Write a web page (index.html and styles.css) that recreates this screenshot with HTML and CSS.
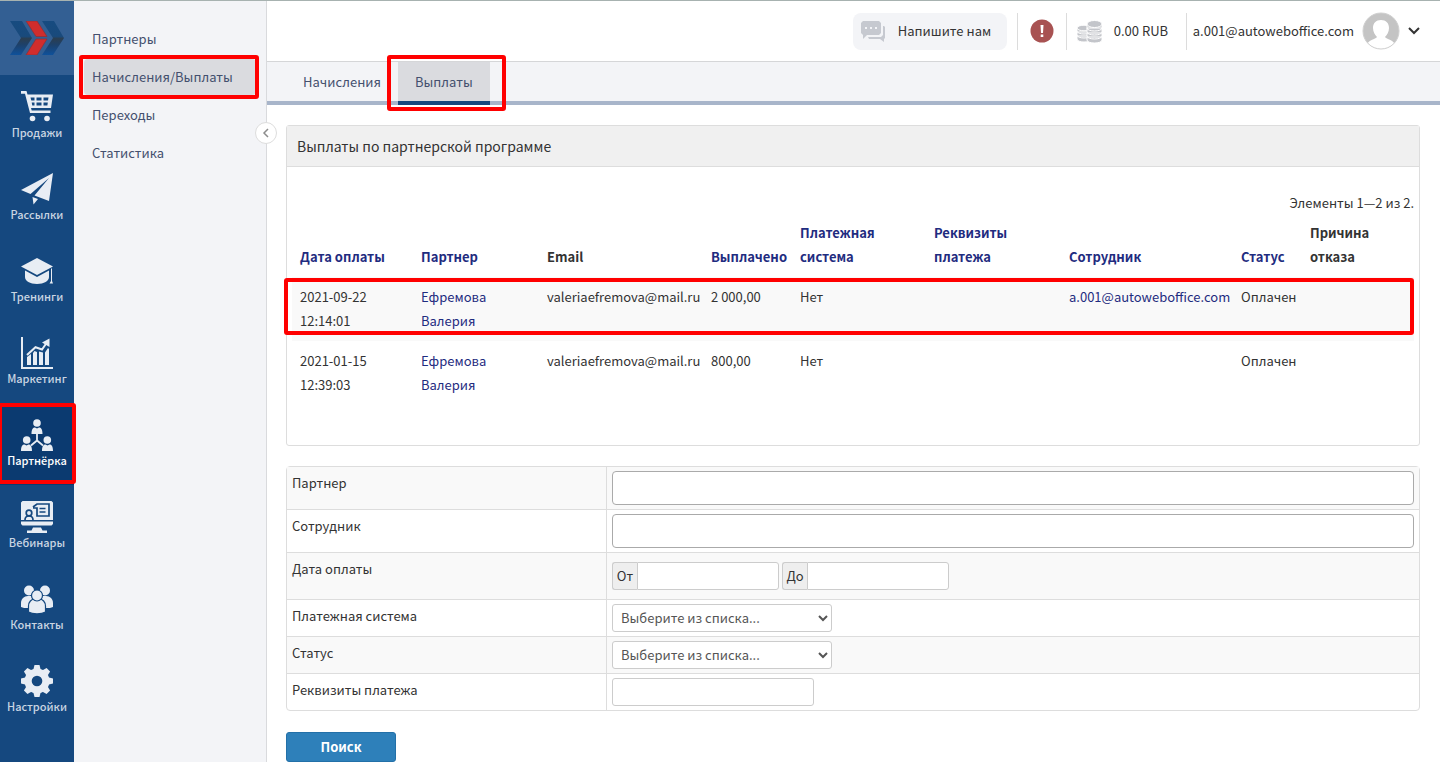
FILE: index.html
```
<!DOCTYPE html>
<html lang="ru">
<head>
    <meta charset="UTF-8">
    <meta name="viewport" content="width=device-width, initial-scale=1.0">
    <title>Выплаты по партнерской программе</title>
    <link rel="stylesheet" href="styles.css">
</head>
<body>
    <div class="layout">
        <nav class="sidebar">
            <a href="#" class="logo" aria-label="AutoWebOffice">
                <svg width="54" height="34" viewBox="0 0 54 34">
                    <defs>
                        <linearGradient id="logoBlue" x1="0" y1="0" x2="0" y2="1">
                            <stop offset="0" stop-color="#174b80"/>
                            <stop offset="0.45" stop-color="#194a7c"/>
                            <stop offset="0.52" stop-color="#2b3e50"/>
                            <stop offset="0.7" stop-color="#1d416b"/>
                            <stop offset="1" stop-color="#0f519b"/>
                        </linearGradient>
                    </defs>
                    <path d="M0 0h12l10 17-11 17H0l11-17z" fill="url(#logoBlue)"/>
                    <path d="M32 0h12l10 17-11 17H32l11-17z" fill="url(#logoBlue)"/>
                    <path d="M16 0h11l10 15.500H26z M26 18h11L27 34H16z" fill="#d02d2d" stroke="#8f3038" stroke-width="0.800"/>
                </svg>
            </a>
            <a href="#" class="side-item">
                <svg width="32" height="32" viewBox="0 0 32 32" fill="currentColor">
                    <path d="M0 0h5.500l1 3.500H32L30 17H10l.7 2.500h18.800v2.500H9L4 2.800H0z"/>
                    <path d="M9.500 6.500h4v3h-3.200z M15.500 6.500h5v3h-5z M22.500 6.500h5l-.5 3h-4.500z M10.700 11.500h2.800v3h-2.200z M15.500 11.500h5v3h-5z M22.500 11.500h4.300l-.4 3h-3.900z" fill="#15487f"/>
                    <circle cx="11.500" cy="27.500" r="2.800"/><circle cx="26" cy="27.500" r="2.800"/>
                </svg>
                <span>Продажи</span>
            </a>
            <a href="#" class="side-item">
                <svg width="32" height="32" viewBox="0 0 32 32" fill="currentColor">
                    <path d="M32 0L0 17l9.500 4L28 5 13.500 22.500 28 28z M11.500 24l5.500 2-4.500 5.500z"/>
                </svg>
                <span>Рассылки</span>
            </a>
            <a href="#" class="side-item">
                <svg width="32" height="32" viewBox="0 0 32 32" fill="currentColor">
                    <path d="M16 3L32 11.500 16 20 0 11.500z"/>
                    <path d="M4 15.500l12 6.500 12-6.500V22c0 4-5 7-12 7S4 26 4 22z"/>
                    <path d="M30 13.500h1V26l1 2.500h-3.500l1.500-2.500z"/>
                </svg>
                <span>Тренинги</span>
            </a>
            <a href="#" class="side-item">
                <svg width="32" height="32" viewBox="0 0 32 32" fill="currentColor">
                    <path d="M0 0h2v30h30v2H0z"/>
                    <path d="M6 20l4-3v11H6z M12 16l1.500-2 2.500 1v13h-4z M18 14.500l4 1V28h-4z M24 15.500l3-4.500 1 1v16h-4z"/>
                    <path d="M6 18l8.500-7.800 6.500 2.300 4.200-6" fill="none" stroke="currentColor" stroke-width="2"/>
                    <path d="M28.500 1.500V10l-7.500-4.500z"/>
                </svg>
                <span>Маркетинг</span>
            </a>
            <a href="#" class="side-item side-item-active marked">
                <svg width="32" height="32" viewBox="0 0 32 32" fill="currentColor">
                    <circle cx="16" cy="4" r="3.800"/>
                    <path d="M10.500 15c0-5 1.500-6.500 3.500-6.500l2 1 2-1c2 0 3.500 1.500 3.500 6.500z"/>
                    <circle cx="5.700" cy="21" r="3.800"/><circle cx="26.300" cy="21" r="3.800"/>
                    <path d="M0 32c0-5 1.500-6.500 3.500-6.500l2 1 2-1c2 0 3.500 1.500 3.500 6.500z M21 32c0-5 1.500-6.500 3.500-6.500l2 1 2-1c2 0 3.500 1.500 3.500 6.500z"/>
                    <path d="M16 14v8M10 26.500l6-5 6 5" fill="none" stroke="currentColor" stroke-width="1.800"/>
                </svg>
                <span>Партнёрка</span>
            </a>
            <a href="#" class="side-item">
                <svg width="32" height="32" viewBox="0 0 32 32" fill="currentColor">
                    <path d="M1.500 0h29L32 1.500V19H0V1.500z M0 20.500h32V23l-1.500 1.500h-29L0 23z M12 26.500h8l1.500 3H26V32H6v-2.500h4.500z"/>
                    <g fill="none" stroke="#15487f" stroke-width="1.700">
                        <circle cx="8" cy="12" r="2.800"/>
                        <path d="M4 19c0-3 1-4 4-4s4 1 4 4M12 6l4-3h12v12H16V7H12M18.500 7.500h6M18.500 11h6"/>
                    </g>
                </svg>
                <span>Вебинары</span>
            </a>
            <a href="#" class="side-item">
                <svg width="32" height="32" viewBox="0 0 32 32" fill="currentColor">
                    <circle cx="8" cy="7.500" r="5"/><circle cx="24" cy="7.500" r="5"/>
                    <path d="M0 24v-4c0-4 3-7 7-7h18c4 0 7 3 7 7v4c-2 1-4 1-7 1H7c-3 0-5 0-7-1z"/>
                    <g stroke="#15487f" stroke-width="1.200">
                        <path d="M7.500 29v-6c0-4 3-7 6-7h5c3 0 6 3 6 7v6c-4 2.500-13 2.500-17 0z"/>
                        <circle cx="16" cy="12.500" r="5.500"/>
                    </g>
                </svg>
                <span>Контакты</span>
            </a>
            <a href="#" class="side-item">
                <svg width="32" height="32" viewBox="0 0 32 32">
                    <g fill="currentColor">
                        <circle cx="16" cy="16" r="12.500"/>
                        <path id="tooth" d="M12 6l1.500-6h5L20 6v20l-1.500 6h-5L12 26z"/>
                        <use href="#tooth" transform="rotate(45 16 16)"/>
                        <use href="#tooth" transform="rotate(90 16 16)"/>
                        <use href="#tooth" transform="rotate(135 16 16)"/>
                    </g>
                    <circle cx="16" cy="16" r="5.300" fill="#15487f"/>
                </svg>
                <span>Настройки</span>
            </a>
        </nav>

        <nav class="submenu">
            <a href="#">Партнеры</a>
            <a href="#" class="active marked">Начисления/Выплаты</a>
            <a href="#">Переходы</a>
            <a href="#">Статистика</a>
            <button type="button" class="collapse" aria-label="Свернуть меню">
                <svg width="8" height="10" viewBox="0 0 8 10" fill="none" stroke="#8c8c8c" stroke-width="1.500"><path d="M6 1L2 5l4 4"/></svg>
            </button>
        </nav>

        <div class="main">
            <header class="topbar">
                <button type="button" class="chat">
                    <svg width="24" height="22" viewBox="0 0 24 22">
                        <path d="M22 6h1l1 1v11l-1 1v3l-4-3H8l-1-2h13l2-2z" fill="#c6c9d0"/>
                        <path d="M2 1h16l2 2v10l-2 2H6l-4 4v-4l-2-2V3z" fill="#c6c9d0"/>
                        <path d="M4 7h2v2H4z M9 7h2v2H9z M14 7h2v2h-2z" fill="#f3f4f7"/>
                    </svg>
                    Напишите нам
                </button>
                <a href="#" class="alert top-cell" aria-label="Уведомления">
                    <svg width="24" height="24" viewBox="0 0 24 24">
                        <circle cx="12" cy="12" r="11.500" fill="#a85252"/>
                        <path d="M10.500 6h3l-.5 8h-2z M10.700 15.500h2.600V18h-2.600z" fill="#fff"/>
                    </svg>
                </a>
                <a href="#" class="balance top-cell">
                    <svg width="25" height="23" viewBox="0 0 25 23">
                        <g fill="#c3c5ca" stroke="#fff">
                            <path d="M0 16v3c0 4 14 4 14 0v-3z M0 12v3c0 4 14 4 14 0v-3z M0 8v3c0 4 14 4 14 0V8z"/>
                            <ellipse cx="7" cy="8" rx="7" ry="2.800"/>
                            <path d="M10 17v3c0 4 15 4 15 0v-3z M10 13v3c0 4 15 4 15 0v-3z M10 8v4c0 4 15 4 15 0V8z M10 4v4c0 4 15 4 15 0V4z"/>
                            <ellipse cx="17.500" cy="4" rx="7.500" ry="3.500"/>
                        </g>
                    </svg>
                    0.00 RUB
                </a>
                <a href="#" class="user top-cell">
                    <span>a.001@autoweboffice.com</span>
                    <svg width="38" height="38" viewBox="0 0 38 38">
                        <defs><clipPath id="avatarClip"><circle cx="19" cy="19" r="18"/></clipPath></defs>
                        <circle cx="19" cy="19" r="18" fill="#c4c4c4"/>
                        <path d="M19 8c-5 0-8 3-8 8 0 4 2 7 4 9-1 2-10 3-10 9v4h28v-4c0-6-9-7-10-9 2-2 4-5 4-9 0-5-3-8-8-8z" fill="#fff" clip-path="url(#avatarClip)"/>
                        <circle cx="19" cy="19" r="18" fill="none" stroke="#d0d0d0"/>
                    </svg>
                    <svg width="12" height="8" viewBox="0 0 12 8" fill="none" stroke="#333" stroke-width="2"><path d="M1 1l5 5 5-5"/></svg>
                </a>
            </header>

            <nav class="tabs">
                <a href="#">Начисления</a>
                <a href="#" class="active marked">Выплаты</a>
            </nav>

            <main class="content">
                <section class="panel">
                    <h1>Выплаты по партнерской программе</h1>
                    <div class="panel-body">
                        <div class="summary">Элементы 1—2 из 2.</div>
                        <table class="payments">
                            <colgroup>
                                <col class="col-date"><col class="col-partner"><col class="col-email">
                                <col class="col-sum"><col class="col-system"><col class="col-details">
                                <col class="col-staff"><col class="col-status"><col>
                            </colgroup>
                            <thead>
                                <tr>
                                    <th><a href="#">Дата оплаты</a></th>
                                    <th><a href="#">Партнер</a></th>
                                    <th>Email</th>
                                    <th><a href="#">Выплачено</a></th>
                                    <th><a href="#">Платежная система</a></th>
                                    <th><a href="#">Реквизиты платежа</a></th>
                                    <th><a href="#">Сотрудник</a></th>
                                    <th><a href="#">Статус</a></th>
                                    <th>Причина отказа</th>
                                </tr>
                            </thead>
                            <tbody>
                                <tr class="odd marked">
                                    <td>2021-09-22<br>12:14:01</td>
                                    <td><a href="#">Ефремова Валерия</a></td>
                                    <td>valeriaefremova@mail.ru</td>
                                    <td>2 000,00</td>
                                    <td>Нет</td>
                                    <td></td>
                                    <td><a href="#">a.001@autoweboffice.com</a></td>
                                    <td>Оплачен</td>
                                    <td></td>
                                </tr>
                                <tr>
                                    <td>2021-01-15<br>12:39:03</td>
                                    <td><a href="#">Ефремова Валерия</a></td>
                                    <td>valeriaefremova@mail.ru</td>
                                    <td>800,00</td>
                                    <td>Нет</td>
                                    <td></td>
                                    <td></td>
                                    <td>Оплачен</td>
                                    <td></td>
                                </tr>
                            </tbody>
                        </table>
                    </div>
                </section>

                <form class="search">
                    <div class="filters">
                        <div class="row">
                            <label for="partner">Партнер</label>
                            <div class="field"><input type="text" id="partner" class="wide"></div>
                        </div>
                        <div class="row">
                            <label for="staff">Сотрудник</label>
                            <div class="field"><input type="text" id="staff" class="wide"></div>
                        </div>
                        <div class="row">
                            <span class="label">Дата оплаты</span>
                            <div class="field dates">
                                <div class="addon"><label for="dateFrom">От</label><input type="text" id="dateFrom"></div>
                                <div class="addon"><label for="dateTo">До</label><input type="text" id="dateTo"></div>
                            </div>
                        </div>
                        <div class="row">
                            <label for="system">Платежная система</label>
                            <div class="field"><select id="system"><option>Выберите из списка...</option></select></div>
                        </div>
                        <div class="row">
                            <label for="status">Статус</label>
                            <div class="field"><select id="status"><option>Выберите из списка...</option></select></div>
                        </div>
                        <div class="row">
                            <label for="details">Реквизиты платежа</label>
                            <div class="field"><input type="text" id="details" class="short"></div>
                        </div>
                    </div>
                    <button type="submit" class="submit">Поиск</button>
                </form>
            </main>
        </div>
    </div>
</body>
</html>
```
FILE: styles.css
```
* {
    box-sizing: border-box;
}
body {
    margin: 0;
    font-family: "Noto Sans CJK SC", "Noto Sans", sans-serif;
    font-size: 13px;
    line-height: 24px;
    color: #333;
    background: #fff;
}
a {
    color: #1f2c80;
    text-decoration: none;
}
button, input, select {
    font: inherit;
    margin: 0;
}
svg {
    display: block;
    flex-shrink: 0;
}
.layout {
    display: flex;
    min-height: 100vh;
    border-top: 1px solid #a7b2b0;
}

/* left icon bar */
.sidebar {
    width: 74px;
    flex-shrink: 0;
    background: #15487f;
}
.logo {
    display: flex;
    align-items: center;
    justify-content: center;
    height: 74px;
    background: #335f93;
}
.side-item {
    display: flex;
    flex-direction: column;
    align-items: center;
    gap: 1px;
    height: 82px;
    padding-top: 16px;
    font-size: 11px;
    font-weight: 500;
    line-height: 16px;
    color: #e8edf4;
}
.side-item span {
    color: #c9d5e2;
}
.side-item-active {
    background: #0b3a70;
}
.side-item-active span {
    color: #fff;
}

/* second level menu */
.submenu {
    position: relative;
    display: flex;
    flex-direction: column;
    gap: 2px;
    width: 193px;
    flex-shrink: 0;
    padding: 20px 10px;
    background: #f3f4f7;
    border-right: 1px solid #d9dadd;
}
.submenu a {
    padding: 6px 8px;
    border-radius: 4px;
    color: #44506e;
}
.submenu a.active {
    background: #dadbdf;
}
.collapse {
    position: absolute;
    top: 121px;
    right: -11px;
    z-index: 1;
    display: flex;
    align-items: center;
    justify-content: center;
    width: 22px;
    height: 22px;
    padding: 0;
    border: 1px solid #ddd;
    border-radius: 50%;
    background: #fff;
}

/* red frames around the steps */
.marked {
    position: relative;
}
.marked::after {
    content: "";
    position: absolute;
    z-index: 2;
    border: 4px solid #f00;
    border-radius: 3px;
    pointer-events: none;
}
.side-item.marked::after {
    inset: 0 -2px 1px -2px;
}
.submenu .marked::after {
    inset: -4px -3px -4px -5px;
}
.tabs .marked::after {
    inset: -7px -16px -10px -11px;
}
.payments .marked::after {
    inset: 1px 0 6px -8px;
}

.main {
    flex: 1;
    min-width: 0;
}
.topbar {
    display: flex;
    align-items: center;
    justify-content: flex-end;
    height: 61px;
    padding-right: 20px;
    border-bottom: 1px solid #d5d6d8;
}
.chat {
    display: flex;
    align-items: center;
    gap: 13px;
    width: 154px;
    height: 37px;
    margin-right: 10px;
    padding: 0 8px;
    border: 0;
    border-radius: 8px;
    background: #f3f4f7;
    color: #333;
    white-space: nowrap;
}
.top-cell {
    display: flex;
    align-items: center;
    height: 37px;
    border-left: 1px solid #dcdcdc;
    color: #333;
}
.alert {
    padding: 0 12px;
}
.balance {
    gap: 12px;
    width: 120px;
    padding-left: 10px;
}
.user {
    gap: 8px;
    padding-left: 6px;
}

.tabs {
    display: flex;
    height: 43px;
    padding-left: 19px;
    background: #f3f4f7;
    border-bottom: 4px solid #a8b5ca;
}
.tabs a {
    height: 43px;
    padding: 8px 17px;
    border-bottom: 4px solid transparent;
    color: #44506e;
}
.tabs a.active {
    background: #dadbdf;
    border-bottom-color: #15487f;
}

.content {
    padding: 20px 20px 0 19px;
}
.panel {
    border: 1px solid #ddd;
    border-radius: 3px;
}
.panel h1 {
    margin: 0;
    padding: 8px 10px;
    font-size: 14px;
    font-weight: 400;
    line-height: 24px;
    background: #f0f0f0;
    border-bottom: 1px solid #ddd;
}
.panel-body {
    padding: 24px 5px 40px;
}
.summary {
    text-align: right;
}
.payments {
    width: 100%;
    table-layout: fixed;
    border-collapse: collapse;
}
.payments th,
.payments td {
    padding: 8px;
    text-align: left;
    vertical-align: top;
}
.payments th {
    vertical-align: bottom;
    padding-top: 6px;
    padding-right: 0;
}
.odd {
    background: #f9f9f9;
}
.col-date { width: 121px; }
.col-partner { width: 126px; }
.col-email { width: 164px; }
.col-sum { width: 89px; }
.col-system { width: 134px; }
.col-details { width: 135px; }
.col-staff { width: 172px; }
.col-status { width: 69px; }

/* search filters */
.filters {
    margin-top: 20px;
    border: 1px solid #ddd;
    border-radius: 4px;
}
.row {
    display: grid;
    grid-template-columns: 320px 1fr;
}
.row + .row {
    border-top: 1px solid #ddd;
}
.row:nth-child(odd) {
    background: #f9f9f9;
}
.row > label,
.row > .label {
    padding: 4px 5px;
    border-right: 1px solid #ddd;
}
.field {
    display: flex;
    padding: 4px 5px;
}
.field input,
.field select {
    height: 28px;
    border: 1px solid #ccc;
    border-radius: 3px;
    background: #fff;
    color: #555;
}
.field .wide {
    width: 100%;
    height: 34px;
    border-color: #aaa;
    border-radius: 4px;
}
.field .short {
    width: 202px;
}
.field select {
    width: 220px;
    padding: 0 4px 2px;
}
.dates {
    gap: 3px;
    padding: 9px 5px;
}
.addon {
    display: flex;
}
.addon label {
    width: 25px;
    height: 28px;
    line-height: 26px;
    text-align: center;
    border: 1px solid #ccc;
    border-right: 0;
    border-radius: 3px 0 0 3px;
    background: #eee;
}
.addon input {
    width: 142px;
    border-radius: 0 3px 3px 0;
}
.submit {
    display: block;
    width: 110px;
    height: 30px;
    margin-top: 21px;
    padding: 0;
    border: 1px solid #2370a8;
    border-radius: 3px;
    background: #2e80ba;
    color: #fff;
    font-weight: 700;
}
```
